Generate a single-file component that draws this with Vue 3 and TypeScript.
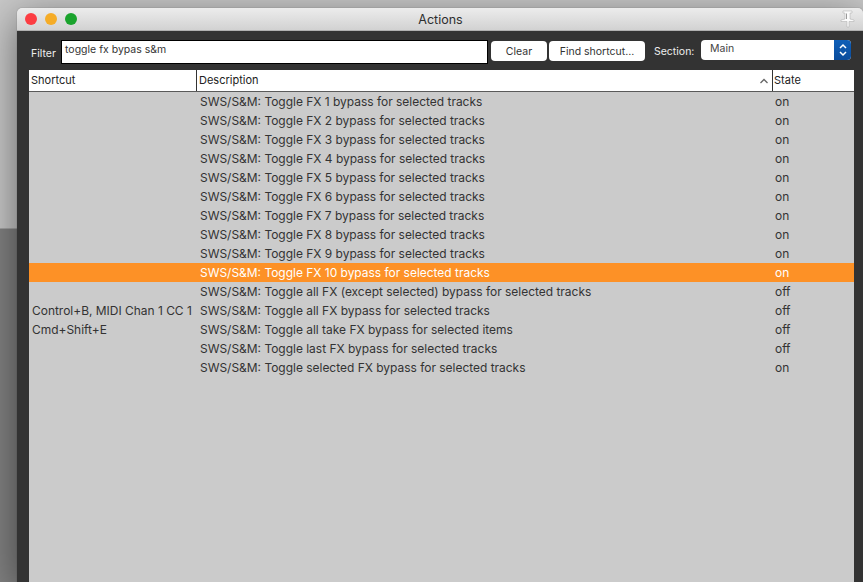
<script setup lang="ts">
interface Row { shortcut: string; desc: string; state: string; selected?: boolean }
const rows: Row[] = [
  ...[1, 2, 3, 4, 5, 6, 7, 8, 9].map((n) => ({
    shortcut: '',
    desc: `SWS/S&M: Toggle FX ${n} bypass for selected tracks`,
    state: 'on',
  })),
  { shortcut: '', desc: 'SWS/S&M: Toggle FX 10 bypass for selected tracks', state: 'on', selected: true },
  { shortcut: '', desc: 'SWS/S&M: Toggle all FX (except selected) bypass for selected tracks', state: 'off' },
  { shortcut: 'Control+B, MIDI Chan 1 CC 1', desc: 'SWS/S&M: Toggle all FX bypass for selected tracks', state: 'off' },
  { shortcut: 'Cmd+Shift+E', desc: 'SWS/S&M: Toggle all take FX bypass for selected items', state: 'off' },
  { shortcut: '', desc: 'SWS/S&M: Toggle last FX bypass for selected tracks', state: 'off' },
  { shortcut: '', desc: 'SWS/S&M: Toggle selected FX bypass for selected tracks', state: 'on' },
]
</script>

<template>
  <div class="desktop">
    <div class="window">
      <div class="titlebar">
        <div class="lights">
          <span class="light red"></span>
          <span class="light yellow"></span>
          <span class="light green"></span>
        </div>
        <span class="title">Actions</span>
        <svg class="pin" width="16" height="18" viewBox="0 0 16 18">
          <path d="M3 1h9v2h-2v6l4 1v1.500H9V17H7v-5.500H1V10l4-1V3H3z" fill="#fbfbfb" stroke="#a8a8a8" stroke-width="0.500" />
          <path d="M6.500 3.500v5.500" fill="none" stroke="#9a9a9a" stroke-width="1" />
        </svg>
      </div>
      <div class="panel">
        <div class="toolbar">
          <label class="filter-label">Filter</label>
          <div class="filter-input">toggle fx bypas s&amp;m</div>
          <button class="btn clear">Clear</button>
          <button class="btn find">Find shortcut...</button>
          <label class="section-label">Section:</label>
          <div class="select">
            <span class="select-text">Main</span>
            <span class="stepper">
              <svg width="10" height="14" viewBox="0 0 10 14">
                <path d="M2 5l3-3 3 3M2 9l3 3 3-3" fill="none" stroke="#fff" stroke-width="1.500" />
              </svg>
            </span>
          </div>
        </div>
        <div class="list">
          <div class="head">
            <div class="hc c1">Shortcut</div>
            <div class="hc c2">
              <span>Description</span>
              <svg class="caret" width="10" height="6" viewBox="0 0 10 6">
                <path d="M1.500 5L5 1.500 8.500 5" fill="none" stroke="#666" stroke-width="1.300" />
              </svg>
            </div>
            <div class="hc c3">State</div>
          </div>
          <div class="body">
            <div v-for="r in rows" :key="r.desc" class="row" :class="{ selected: r.selected }">
              <div class="c1 cell">{{ r.shortcut }}</div>
              <div class="c2 cell">{{ r.desc }}</div>
              <div class="c3 cell">{{ r.state }}</div>
            </div>
          </div>
        </div>
      </div>
    </div>
  </div>
</template>

<style>
html, body { margin: 0; height: 100%; overflow: hidden; }
</style>

<style scoped>
.desktop {
  width: 863px;
  height: 582px;
  overflow: hidden;
  box-sizing: border-box;
  padding: 8px 0 0 17px;
  background: linear-gradient(180deg, #c8c8c8 0, #c8c8c8 228px, #828282 229px, #828282 100%);
  font-family: "Inter", "Liberation Sans", sans-serif;
}
.window {
  height: 574px;
  display: flex;
  flex-direction: column;
  border-radius: 5px 5px 0 0;
  box-shadow: 0 10px 40px rgba(0, 0, 0, 0.5), 0 0 1px rgba(0, 0, 0, 0.5);
}
.titlebar {
  height: 22px;
  flex: none;
  display: flex;
  align-items: center;
  position: relative;
  background: linear-gradient(180deg, #ececec, #d2d2d2);
  border-bottom: 1px solid #b0b0b0;
  border-radius: 5px 5px 0 0;
}
.lights { display: flex; gap: 8px; padding-left: 8px; }
.light { width: 12px; height: 12px; border-radius: 50%; }
.red { background: #fc3d42; }
.yellow { background: #f5ac27; }
.green { background: #1aa32d; }
.title {
  position: absolute;
  left: 1px;
  right: 0;
  text-align: center;
  font-size: 12.5px;
  color: #2e2e2e;
}
.pin { position: absolute; right: 7px; top: 2px; }
.panel {
  flex: 1;
  min-height: 0;
  background: #333;
  padding: 9px 0 0 12px;
  display: flex;
  flex-direction: column;
}
.toolbar { height: 30px; display: flex; align-items: flex-start; }
.filter-label {
  width: 32px;
  flex: none;
  margin-top: 7px;
  color: #eee;
  font-size: 10.5px;
  padding-left: 2px;
  box-sizing: border-box;
}
.filter-input {
  width: 427px;
  height: 24px;
  flex: none;
  box-sizing: border-box;
  background: #fff;
  border: 1px solid #000;
  padding: 2px 3px;
  font-size: 10.500px;
  color: #333;
}
.btn {
  height: 20px;
  margin-top: 1px;
  background: #fff;
  border: 0;
  border-radius: 4px;
  color: #333;
  font: inherit;
  font-size: 10.5px;
  padding: 0;
}
.clear { width: 56px; margin-left: 3px; }
.find { width: 96px; margin-left: 2px; }
.section-label {
  margin: 5px 0 0 9px;
  width: 47px;
  flex: none;
  color: #eee;
  font-size: 10.5px;
}
.select {
  width: 150px;
  height: 20px;
  flex: none;
  display: flex;
  justify-content: space-between;
  background: #fff;
  border-radius: 4px;
  overflow: hidden;
  font-size: 10.500px;
  color: #444;
}
.select-text { padding: 2px 0 0 9px; }
.stepper {
  width: 17px;
  background: linear-gradient(180deg, #0f5fb8, #0a4c9c);
  display: flex;
  align-items: center;
  justify-content: center;
}
.list {
  flex: 1;
  min-height: 0;
  margin-top: 0;
  background: #cbcbcb;
  display: flex;
  flex-direction: column;
  width: 825px;
}
.head {
  height: 21px;
  flex: none;
  background: #fff;
  border-bottom: 1px solid #5a5a5a;
  display: flex;
  font-size: 11px;
  color: #222;
}
.hc {
  box-sizing: border-box;
  padding: 3px 0 0 2px;
  position: relative;
}
.c1 { width: 167px; flex: none; }
.c2 { width: 576px; flex: none; }
.c3 { flex: 1; }
.hc.c2, .hc.c3 { box-shadow: inset 1px 0 0 #333; }
.hc.c2 { display: flex; justify-content: space-between; padding-left: 3px; }
.caret { margin: 5px 3px 0 0; }
.body { flex: 1; }
.row { height: 19px; display: flex; font-size: 11.96px; color: #333; line-height: 19px; }
.row.selected { background: #fd9126; color: #fff; }
.cell { box-sizing: border-box; white-space: nowrap; overflow: hidden; }
.cell.c1 { padding-left: 3px; }
.cell.c2 { padding-left: 4px; }
.cell.c3 { padding-left: 3px; }
</style>
